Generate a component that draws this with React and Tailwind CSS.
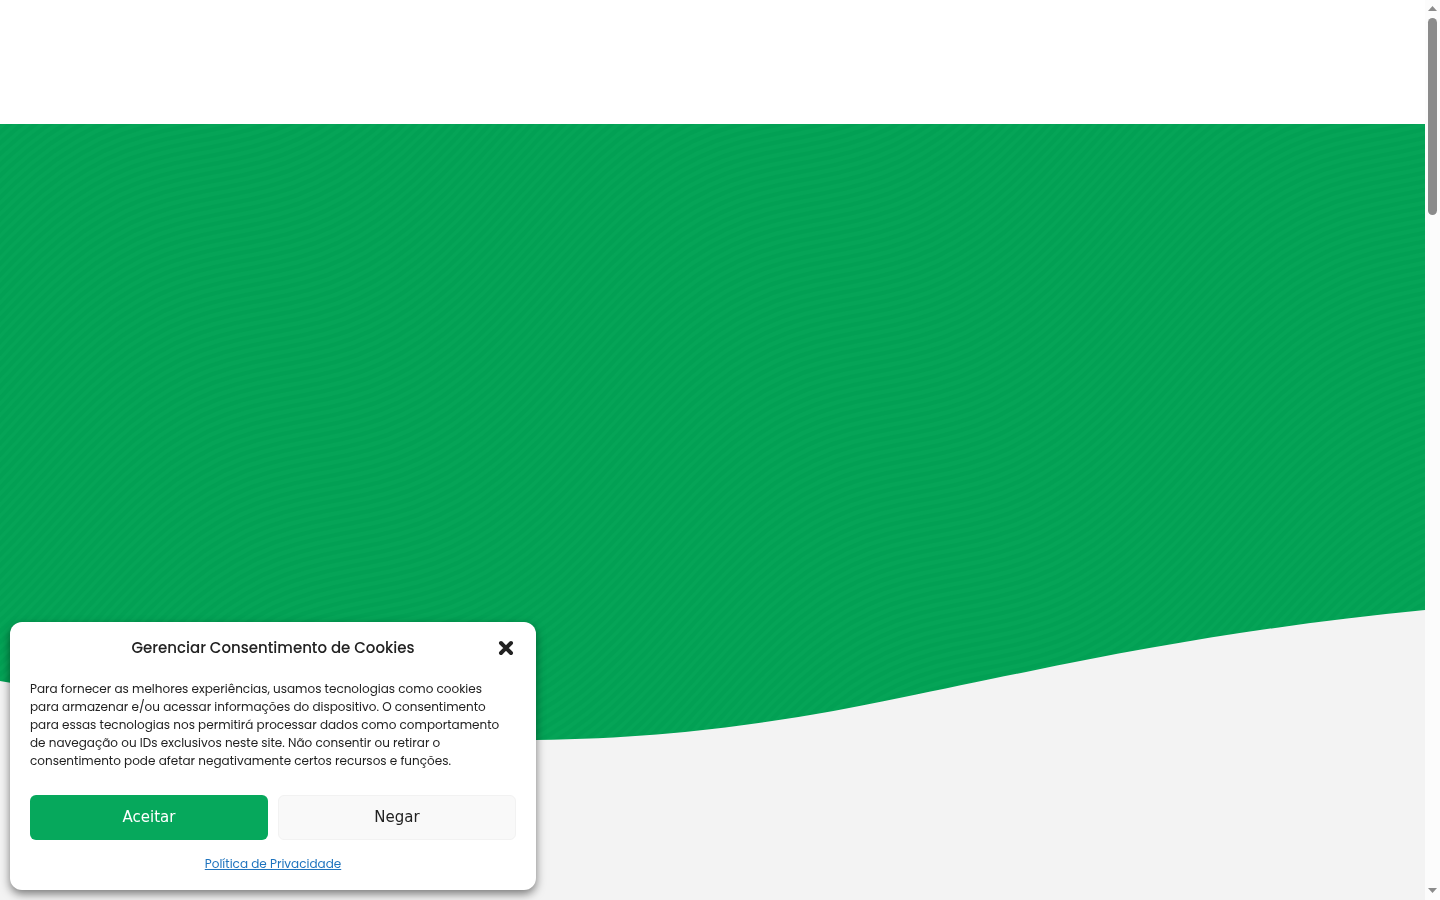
const STEP_X = 3;
const STEP_Y = 8;
const PERIOD = 477;

// One contour line: a falling diagonal with a sine swell.
function contour() {
  let d = "";
  for (let x = -1400; x <= 2000; x += 20) {
    const y = -0.64 * (x - 490) - 34 * Math.sin((2 * Math.PI * (x - 490)) / PERIOD);
    d += (d ? "L" : "M") + x + " " + y.toFixed(1);
  }
  return d;
}

const LINE = contour();
const OFFSETS = Array.from({ length: 240 }, (_, i) => i - 75);

function HeroArt() {
  return (
    <svg
      className="block h-full w-full"
      viewBox="0 0 1425 776"
      preserveAspectRatio="none"
      aria-hidden="true"
    >
      <rect width="1425" height="776" fill="#05a457" />
      <g fill="none" stroke="#009e52" strokeWidth="4" strokeOpacity="0.6">
        {OFFSETS.map((n) => (
          <path key={n} d={LINE} transform={`translate(${n * STEP_X} ${n * STEP_Y})`} />
        ))}
      </g>
      <path
        d="M0 557C180 588 360 616 536 616C752 614 900 572 1026 548C1160 520 1290 499 1425 486V776H0Z"
        fill="#f3f3f3"
      />
    </svg>
  );
}

function ScrollRail() {
  return (
    <div className="flex w-[15px] shrink-0 flex-col items-center bg-[#fcfcfc] pt-1.5 pb-[7px]" aria-hidden="true">
      <svg className="h-[5px] w-[9px]" viewBox="0 0 9 5">
        <path d="M4.5 0L9 5H0Z" fill="#8b8b8b" />
      </svg>
      <div className="flex w-full flex-1 justify-center py-[7px]">
        <div className="h-[197px] w-[9px] rounded-full bg-[#8b8b8b]" />
      </div>
      <svg className="h-[5px] w-[9px]" viewBox="0 0 9 5">
        <path d="M0 0H9L4.5 5Z" fill="#8b8b8b" />
      </svg>
    </div>
  );
}

function CookieDialog() {
  return (
    <div
      role="dialog"
      aria-labelledby="cookie-title"
      className="fixed bottom-2.5 left-2.5 w-[526px] rounded-xl bg-white px-5 pt-3 pb-[17px] text-[#222] shadow-[0_4px_10px_rgba(0,0,0,0.5)]"
    >
      <div className="grid grid-cols-[20px_1fr_20px] items-center">
        <h2 id="cookie-title" className="col-start-2 text-center text-[15px] leading-7 font-medium">
          Gerenciar Consentimento de Cookies
        </h2>
        <button type="button" aria-label="Fechar" className="flex h-7 items-center justify-center">
          <svg className="size-4" viewBox="0 0 16 16" aria-hidden="true">
            <path d="M3 3L13 13M13 3L3 13" stroke="#222" strokeWidth="4" strokeLinecap="round" />
          </svg>
        </button>
      </div>
      <p className="mt-[18px] pr-3 text-xs leading-[18px]">
        Para fornecer as melhores experiências, usamos tecnologias como cookies
        para armazenar e/ou acessar informações do dispositivo. O consentimento
        para essas tecnologias nos permitirá processar dados como comportamento
        de navegação ou IDs exclusivos neste site. Não consentir ou retirar o
        consentimento pode afetar negativamente certos recursos e funções.
      </p>
      <div className="mt-[25px] grid grid-cols-2 gap-2.5 font-['DejaVu_Sans',sans-serif] text-[15px]">
        <button type="button" className="h-[45px] rounded-md bg-[#06a85c] text-white">
          Aceitar
        </button>
        <button type="button" className="h-[45px] rounded-md border border-[#f2f2f2] bg-[#f9f9f9]">
          Negar
        </button>
      </div>
      <div className="mt-[15px] flex justify-center text-xs leading-[18px]">
        <a href="#privacidade" className="text-[#1e73be] underline">
          Política de Privacidade
        </a>
      </div>
    </div>
  );
}

export default function App() {
  return (
    <div className="flex h-screen bg-white font-['Poppins','Inter',sans-serif]">
      <div className="flex min-w-0 flex-1 flex-col">
        <header className="h-[124px] shrink-0 bg-white" />
        <main className="min-h-0 flex-1">
          <HeroArt />
        </main>
      </div>
      <ScrollRail />
      <CookieDialog />
    </div>
  );
}
